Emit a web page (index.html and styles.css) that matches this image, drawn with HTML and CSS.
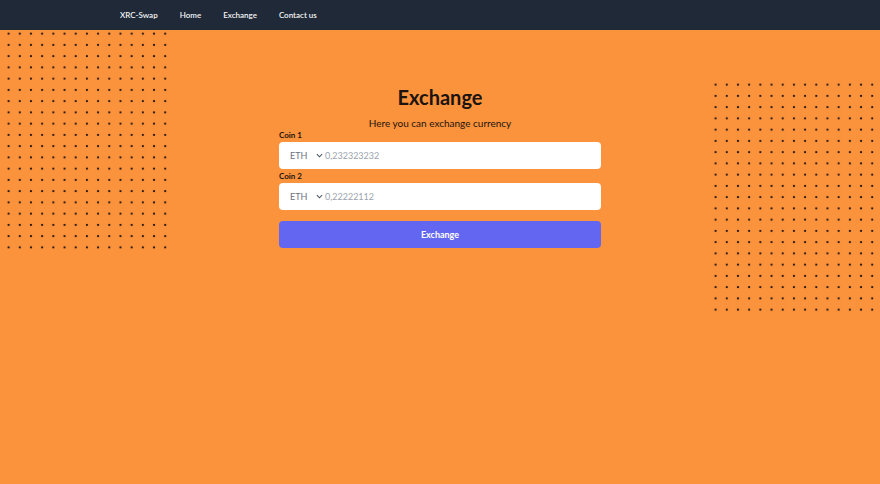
FILE: index.html
```html
<!DOCTYPE html>
<html lang="en">
<head>
    <meta charset="UTF-8">
    <meta name="viewport" content="width=device-width, initial-scale=1.0">
    <title>XRC-Swap - Exchange</title>
    <link rel="stylesheet" href="styles.css">
</head>
<body>
    <nav class="navbar">
        <a href="#" class="nav-link">XRC-Swap</a>
        <a href="#" class="nav-link">Home</a>
        <a href="#" class="nav-link">Exchange</a>
        <a href="#" class="nav-link">Contact us</a>
    </nav>

    <main class="page">
        <div class="dots dots-left"></div>
        <div class="dots dots-right"></div>

        <section class="exchange">
            <h1 class="title">Exchange</h1>
            <p class="subtitle">Here you can exchange currency</p>

            <form class="exchange-form">
                <label class="label" for="amount1">Coin 1</label>
                <div class="field">
                    <select class="coin-select">
                        <option>ETH</option>
                        <option>BTC</option>
                    </select>
                    <svg class="chevron" viewBox="0 0 8 5" width="7" height="5">
                        <path d="M1 1l3 3 3-3" fill="none" stroke="#4b5563" stroke-width="1.2"/>
                    </svg>
                    <input id="amount1" class="amount" type="text" placeholder="0,232323232">
                </div>

                <label class="label" for="amount2">Coin 2</label>
                <div class="field">
                    <select class="coin-select">
                        <option>ETH</option>
                        <option>BTC</option>
                    </select>
                    <svg class="chevron" viewBox="0 0 8 5" width="7" height="5">
                        <path d="M1 1l3 3 3-3" fill="none" stroke="#4b5563" stroke-width="1.2"/>
                    </svg>
                    <input id="amount2" class="amount" type="text" placeholder="0,22222112">
                </div>

                <button type="button" class="exchange-button">Exchange</button>
            </form>
        </section>
    </main>
</body>
</html>
```

FILE: styles.css
```css
* {
    box-sizing: border-box;
}
body {
    margin: 0;
    font-family: Lato, "Open Sans", sans-serif;
    background-color: #fb923c;
    color: #1c1410;
    height: 484px;
    overflow: hidden;
}
.navbar {
    height: 30px;
    background-color: #1f2937;
    display: flex;
    align-items: center;
    gap: 22px;
    padding-left: 120px;
}
.nav-link {
    color: #f3f4f6;
    font-size: 8px;
    font-weight: 600;
    text-decoration: none;
}
.page {
    position: relative;
    height: 454px;
}
.dots {
    position: absolute;
    background-image: radial-gradient(circle, #2a1a14 1.1px, transparent 1.5px);
    background-size: 11.2px 11.25px;
}
.dots-left {
    left: 3px;
    top: -2px;
    width: 168px;
    height: 225px;
}
.dots-right {
    left: 710px;
    top: 49px;
    width: 168px;
    height: 236px;
}
.exchange {
    width: 322px;
    margin: 0 auto;
    padding-top: 54px;
    position: relative;
}
.title {
    margin: 0;
    text-align: center;
    font-size: 20px;
    font-weight: 700;
    line-height: 26px;
}
.subtitle {
    margin: 6px 0 0;
    text-align: center;
    font-size: 10px;
    line-height: 14px;
}
.exchange-form {
    display: flex;
    flex-direction: column;
}
.label {
    font-size: 8px;
    font-weight: 700;
    line-height: 10px;
    margin-bottom: 2px;
}
.field {
    display: flex;
    align-items: center;
    height: 27px;
    background: #ffffff;
    border-radius: 4px;
    margin-bottom: 2px;
    padding-left: 11px;
}
.coin-select {
    appearance: none;
    -webkit-appearance: none;
    border: none;
    background: transparent;
    font-family: inherit;
    font-size: 9px;
    color: #6b7280;
    width: 26px;
    padding: 0;
    outline: none;
}
.chevron {
    margin-right: 2px;
}
.amount {
    flex: 1;
    border: none;
    outline: none;
    font-family: inherit;
    font-size: 9px;
    color: #374151;
    padding: 0;
    background: transparent;
}
.amount::placeholder {
    color: #9ca3af;
}
.exchange-button {
    margin-top: 9px;
    height: 27px;
    border: none;
    border-radius: 4px;
    background-color: #6366f1;
    color: #ffffff;
    font-family: inherit;
    font-size: 9px;
    font-weight: 700;
    cursor: pointer;
}
```
